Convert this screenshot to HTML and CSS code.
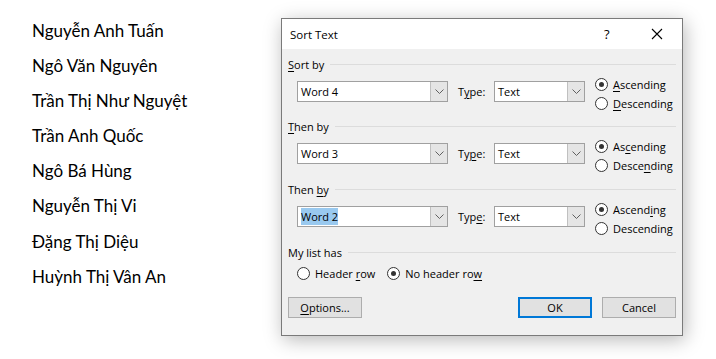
FILE: index.html
```html
<!DOCTYPE html>
<html>
<head>
<meta charset="utf-8">
<link rel="stylesheet" href="styles.css">
</head>
<body>
<div class="doc">
  <p>Nguyễn Anh Tuấn</p>
  <p>Ngô Văn Nguyên</p>
  <p>Trần Thị Như Nguyệt</p>
  <p>Trần Anh Quốc</p>
  <p>Ngô Bá Hùng</p>
  <p>Nguyễn Thị Vi</p>
  <p>Đặng Thị Diệu</p>
  <p>Huỳnh Thị Vân An</p>
</div>
<div class="dialog">
  <div class="titlebar">
    <span class="title">Sort Text</span>
    <span class="help">?</span>
    <svg class="close" width="12" height="12" viewBox="0 0 12 12"><path d="M1 1L11 11M11 1L1 11" stroke="#000" stroke-width="1.1" fill="none"/></svg>
  </div>
  <div class="body">
    <div class="section">
      <div class="group"><span><u>S</u>ort by</span><i class="rule"></i></div>
      <div class="row">
        <div class="combo wide"><span class="val">Word 4</span><span class="drop"><svg width="9" height="5" viewBox="0 0 9 5"><path d="M0.5 0.5L4.5 4.5L8.5 0.5" stroke="#606060" fill="none"/></svg></span></div>
        <span class="tlabel">T<u>y</u>pe:</span>
        <div class="combo narrow"><span class="val">Text</span><span class="drop"><svg width="9" height="5" viewBox="0 0 9 5"><path d="M0.5 0.5L4.5 4.5L8.5 0.5" stroke="#606060" fill="none"/></svg></span></div>
        <div class="radios">
          <label class="radio on"><i></i><span><u>A</u>scending</span></label>
          <label class="radio"><i></i><span><u>D</u>escending</span></label>
        </div>
      </div>
    </div>
    <div class="section">
      <div class="group"><span><u>T</u>hen by</span><i class="rule"></i></div>
      <div class="row">
        <div class="combo wide"><span class="val">Word 3</span><span class="drop"><svg width="9" height="5" viewBox="0 0 9 5"><path d="M0.5 0.5L4.5 4.5L8.5 0.5" stroke="#606060" fill="none"/></svg></span></div>
        <span class="tlabel">Ty<u>p</u>e:</span>
        <div class="combo narrow"><span class="val">Text</span><span class="drop"><svg width="9" height="5" viewBox="0 0 9 5"><path d="M0.5 0.5L4.5 4.5L8.5 0.5" stroke="#606060" fill="none"/></svg></span></div>
        <div class="radios">
          <label class="radio on"><i></i><span>As<u>c</u>ending</span></label>
          <label class="radio"><i></i><span>Desce<u>n</u>ding</span></label>
        </div>
      </div>
    </div>
    <div class="section">
      <div class="group"><span>Then <u>b</u>y</span><i class="rule"></i></div>
      <div class="row">
        <div class="combo wide"><span class="val"><span class="sel">Word 2</span></span><span class="drop"><svg width="9" height="5" viewBox="0 0 9 5"><path d="M0.5 0.5L4.5 4.5L8.5 0.5" stroke="#606060" fill="none"/></svg></span></div>
        <span class="tlabel">Typ<u>e</u>:</span>
        <div class="combo narrow"><span class="val">Text</span><span class="drop"><svg width="9" height="5" viewBox="0 0 9 5"><path d="M0.5 0.5L4.5 4.5L8.5 0.5" stroke="#606060" fill="none"/></svg></span></div>
        <div class="radios">
          <label class="radio on"><i></i><span>Ascend<u>i</u>ng</span></label>
          <label class="radio"><i></i><span>Descendin<u>g</u></span></label>
        </div>
      </div>
    </div>
    <div class="listsec">
      <div class="group"><span>My list has</span><i class="rule"></i></div>
      <div class="hrow">
        <label class="radio"><i></i><span>Header <u>r</u>ow</span></label>
        <label class="radio on"><i></i><span>No header ro<u>w</u></span></label>
      </div>
    </div>
    <div class="buttons">
      <button class="btn"><u>O</u>ptions...</button>
      <span class="spacer"></span>
      <button class="btn default">OK</button>
      <button class="btn">Cancel</button>
    </div>
  </div>
</div>
</body>
</html>
```
FILE: styles.css
```css
html, body { margin: 0; padding: 0; background: #fff; }
body {
  display: flex;
  align-items: flex-start;
  width: 716px;
  height: 359px;
  overflow: hidden;
}
.doc {
  padding: 13px 0 0 32px;
  width: 249px;
  font-family: Lato, "Open Sans", sans-serif;
  font-size: 17px;
  color: #000;
}
.doc p { margin: 0; height: 35.1px; line-height: 35px; }

.dialog {
  margin-top: 18px;
  width: 400px;
  height: 316px;
  border: 1px solid #7a7a7a;
  background: #f0f0f0;
  box-shadow: 2px 4px 18px rgba(0,0,0,0.28);
  font-family: "Open Sans", "Noto Sans", sans-serif;
  font-size: 11px;
  color: #000;
  display: flex;
  flex-direction: column;
}
u { text-decoration: underline; text-underline-offset: 2px; text-decoration-thickness: 1px; }
.titlebar {
  height: 30px;
  background: #fff;
  display: flex;
  align-items: center;
  padding-left: 8px;
  font-size: 11.5px;
}
.title { flex: 1; }
.help { width: 14px; font-size: 13px; margin-right: 33px; }
.close { margin-right: 19px; }
.body { padding: 0 6px 0 6px; display: flex; flex-direction: column; }
.section { height: 63px; }
.group {
  display: flex;
  align-items: center;
  height: 16px;
  margin-top: 6px;
}
.section:first-child .group { margin-top: 7px; }
.rule { flex: 1; height: 1px; background: #dcdcdc; margin-left: 6px; }
.row {
  display: flex;
  align-items: flex-start;
  padding-left: 9px;
  margin-top: 9px;
}
.combo {
  height: 19px;
  border: 1px solid #a0a0a0;
  background: #fff;
  display: flex;
  align-items: stretch;
}
.combo.wide { width: 149px; }
.combo.narrow { width: 89px; }
.val { flex: 1; padding-left: 3px; line-height: 19px; white-space: nowrap; }
.sel { background: #99c9ef; padding: 1px 0; }
.drop {
  width: 16px;
  background: #e5e5e5;
  border-left: 1px solid #c0c0c0;
  display: flex;
  align-items: center;
  justify-content: center;
}
.tlabel { margin-left: 10px; width: 36px; line-height: 21px; }
.radios { margin-left: 10px; margin-top: -4px; display: flex; flex-direction: column; gap: 5px; }
.radio { display: flex; align-items: center; gap: 5px; height: 14px; white-space: nowrap; }
.radio i {
  width: 11px; height: 11px; border: 1px solid #333; border-radius: 50%;
  background: #fff; position: relative; box-sizing: content-box;
}
.radio.on i::after {
  content: ""; position: absolute; left: 3px; top: 3px; width: 5px; height: 5px;
  border-radius: 50%; background: #333;
}
.listsec { height: 59px; }
.hrow { display: flex; padding-left: 9px; margin-top: 6px; gap: 12px; }
.buttons { display: flex; gap: 10px; margin-top: 0; }
.spacer { flex: 1; }
.btn {
  width: 74px; height: 21px;
  border: 1px solid #adadad;
  background: #e1e1e1;
  font: inherit;
  padding: 0;
  color: #000;
}
.btn.default { border: 2px solid #0078d7; }
```
